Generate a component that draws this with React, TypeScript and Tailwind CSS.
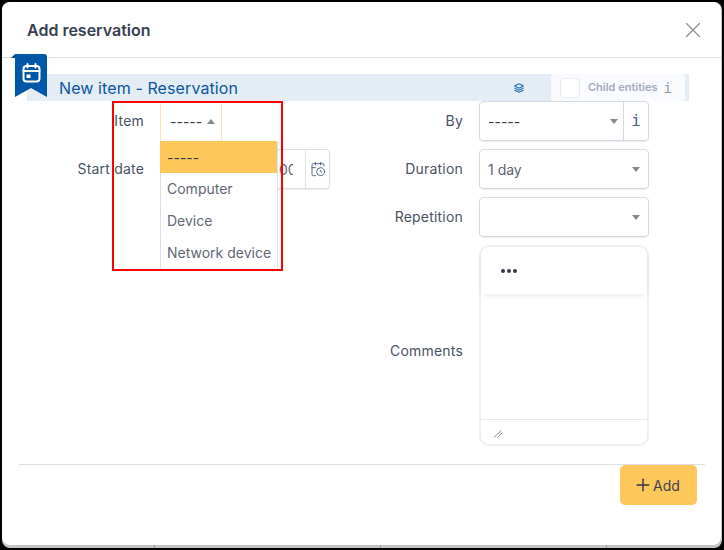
import { X, Plus, CalendarClock, Layers } from "lucide-react";

function Caret({ up = false }: { up?: boolean }) {
  return (
    <svg width="8" height="5" viewBox="0 0 8 5" className="shrink-0">
      <path d={up ? "M0 5 L4 0 L8 5 Z" : "M0 0 L4 5 L8 0 Z"} fill="#888888" />
    </svg>
  );
}

function Row({ label, children, className = "", labelClass = "" }: { label: string; children: React.ReactNode; className?: string; labelClass?: string }) {
  return (
    <div className={`flex ${className}`}>
      <label className={`w-[0px] grow text-right text-[14px] leading-[40px] tracking-[0.2px] text-[#4a5363] pr-4 ${labelClass}`}>{label}</label>
      {children}
    </div>
  );
}

function Select({ value, className = "" }: { value: string; className?: string }) {
  return (
    <div className={`h-10 flex items-center justify-between pl-2 pr-[8px] bg-white border border-[#d5d9e6] rounded-[4px] shadow-[0_1px_1px_rgba(0,0,0,0.05)] text-[14px] text-[#5a6372] ${className}`}>
      <span>{value}</span>
      <Caret />
    </div>
  );
}

export default function App() {
  return (
    <div className="relative w-[724px] h-[550px] bg-black pt-[2px] pl-[2px] pr-[2px] pb-[2px] overflow-hidden" style={{ fontFamily: "Inter, sans-serif" }}>
      <div className="relative w-full h-full bg-[#c3c5c7] rounded-[8px] pb-[3px] pr-[1px]">
        <span className="absolute left-[152px] bottom-0 w-px h-[3px] bg-[#9a9c9e]" />
        <span className="absolute left-[378px] bottom-0 w-px h-[3px] bg-[#9a9c9e]" />
        <span className="absolute left-[604px] bottom-0 w-px h-[3px] bg-[#9a9c9e]" />
        <div className="relative w-full h-full bg-white rounded-[8px] flex flex-col">
          <div className="h-[56px] shrink-0 flex items-center justify-between pl-[25px] pr-[15px] border-b border-[#dcdfe3]">
            <h1 className="text-[16px] font-semibold text-[#374151]">Add reservation</h1>
            <X size={26} strokeWidth={1.1} className="text-[#8a8f96]" />
          </div>

          <div className="absolute left-[9px] top-[52px] w-[4px] h-[4px] bg-[#00458a] [clip-path:polygon(100%_0,100%_100%,0_100%)]" />
          <div className="absolute left-[13px] top-[52px] w-[32px] h-[43px] bg-[#0056a7] rounded-tr-[3px] flex justify-center pt-[9px] [clip-path:polygon(0_0,100%_0,100%_100%,50%_79%,0_100%)]">
            <svg width="19" height="20" viewBox="0 0 19 20" fill="none" stroke="white" strokeWidth="2" strokeLinecap="round" strokeLinejoin="round">
              <rect x="1.5" y="3" width="16" height="15.5" rx="3" />
              <path d="M5.5 1 V4.5 M13.5 1 V4.5 M1.5 8 H17.5" />
              <rect x="4.5" y="11.5" width="4" height="3.5" fill="white" stroke="none" />
            </svg>
          </div>

          <div className="ml-[25px] mr-[32px] mt-[16px] h-[27px] bg-[#e4edf5] flex items-center pl-[32px] shrink-0">
            <span className="text-[16px] tracking-[0.1px] text-[#0a56a0] grow pt-[1px]">New item - Reservation</span>
            <Layers size={10} strokeWidth={2.5} className="text-[#1b66b5] mr-[27px]" />
            <div className="h-[27px] w-[134px] bg-[#f8fafd] rounded-[3px] flex items-center pl-[9px] mr-[4px]">
              <span className="w-[20px] h-[20px] bg-white border border-[#e8ebf1] rounded-[4px] mr-[8px]" />
              <span className="text-[11px] font-semibold text-[#a3abc0]">Child entities</span>
              <span className="ml-[6px] text-[14px] leading-none text-[#8f98ad]" style={{ fontFamily: "'DejaVu Sans Mono', monospace" }}>i</span>
            </div>
          </div>

          <div className="grid grid-cols-[328px_319px] pl-0 shrink-0">
            <div className="flex flex-col gap-2">
              <Row label="Item">
                <div className="w-[170px]">
                  <div className="w-[62px] h-10 flex items-center gap-[5px] pl-[9px] bg-white border-x border-[#fde3ae] text-[14px] text-[#333b48]">
                    <span>-----</span>
                    <Caret up />
                  </div>
                </div>
              </Row>
              <Row label="Start date">
                <div className="w-[170px] h-10 flex justify-end bg-white border border-[#dde0e8] rounded-[4px] shadow-[0_1px_1px_rgba(0,0,0,0.08)] overflow-hidden">
                  <span className="flex items-center w-[26px] text-[14px] text-[#5f6775] overflow-hidden whitespace-nowrap">
                    <span className="w-[14px] overflow-hidden">00</span>
                  </span>
                  <span className="w-[24px] flex items-center justify-center border-l border-[#dde0e8]">
                    <CalendarClock size={16} strokeWidth={1.4} className="text-[#4b5f8a]" />
                  </span>
                </div>
              </Row>
            </div>

            <div className="flex flex-col gap-2 pr-[0px]">
              <Row label="By">
                <div className="w-[170px] h-10 flex bg-white border border-[#d5d9e6] rounded-[4px] shadow-[0_1px_1px_rgba(0,0,0,0.08)]">
                  <div className="grow flex items-center justify-between pl-2 pr-[5px] text-[14px] text-[#333b48]">
                    <span>-----</span>
                    <Caret />
                  </div>
                  <div className="w-[25px] flex items-center justify-center border-l border-[#d5d9e6]">
                    <span className="text-[16px] text-[#4b5f8a]" style={{ fontFamily: "'DejaVu Sans Mono', monospace" }}>i</span>
                  </div>
                </div>
              </Row>
              <Row label="Duration"><Select value="1 day" className="w-[170px]" /></Row>
              <Row label="Repetition"><Select value="" className="w-[170px]" /></Row>
              <Row label="Comments" className="items-center" labelClass="mt-[11px]">
                <div className="w-[170px] h-[201px] flex flex-col border-2 border-[#efefef] rounded-[10px] bg-white">
                  <div className="h-[47px] shrink-0 flex items-center pl-[20px] gap-[2px] shadow-[0_4px_6px_-2px_rgba(0,0,0,0.08)]">
                    <span className="w-[4px] h-[4px] rounded-full bg-[#333b48]" />
                    <span className="w-[4px] h-[4px] rounded-full bg-[#333b48]" />
                    <span className="w-[4px] h-[4px] rounded-full bg-[#333b48]" />
                  </div>
                  <div className="grow" />
                  <div className="h-[25px] shrink-0 border-t border-[#e8e8e8] flex items-center pl-[12px] pt-[4px]">
                    <svg width="10" height="10" viewBox="0 0 10 10" stroke="#7c8290" strokeWidth="1" fill="none">
                      <path d="M1 8.5 L8 1.5 M4.5 8.5 L9 4" />
                    </svg>
                  </div>
                </div>
              </Row>
            </div>
          </div>

          <div className="ml-[17px] mr-[16px] mt-[18px] border-t border-[#dcdfe3] flex justify-end pr-[8px] shrink-0">
            <button className="w-[77px] h-[40px] bg-[#fec75b] rounded-[5px] flex items-center pl-[13px] text-[14px] text-[#3a4252]">
              <Plus size={20} strokeWidth={1.7} className="text-[#2f3747]" />
              Add
            </button>
          </div>

          <div className="absolute left-[158px] top-[139px] w-[118px] h-[130px] bg-white border border-[#dde0e8] border-t-0 rounded-b-[4px] text-[14px] text-[#5f6775]">
            <div className="h-8 bg-[#fec75b] -ml-px pl-[7px] flex items-center text-[#333b48]">-----</div>
            <div className="h-8 pl-[6px] pb-[2px] flex items-center">Computer</div>
            <div className="h-8 pl-[6px] pb-[2px] flex items-center">Device</div>
            <div className="h-8 pl-[6px] pb-[2px] flex items-center">Network device</div>
          </div>

          <div className="absolute left-[110px] top-[99px] w-[171px] h-[170px] border-2 border-[#ff0000] pointer-events-none" />
        </div>
      </div>
    </div>
  );
}
